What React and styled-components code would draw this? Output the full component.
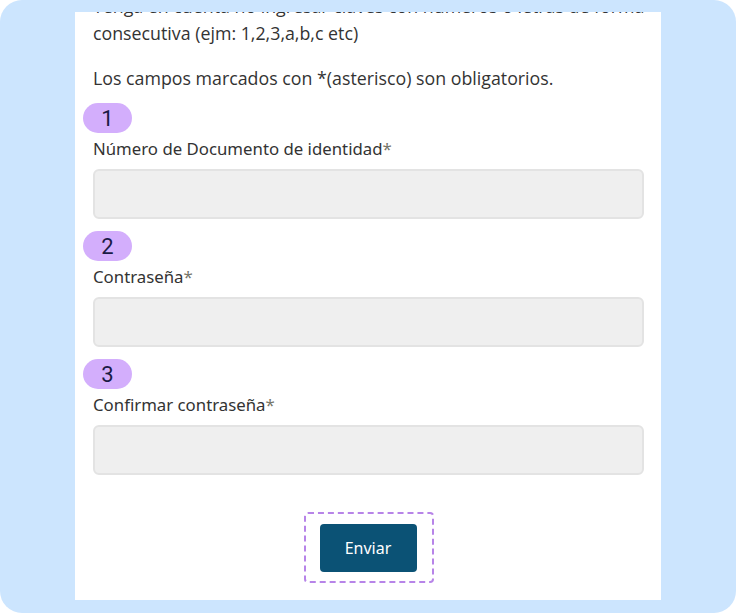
import React, { useLayoutEffect, useRef } from "react";
import styled, { createGlobalStyle } from "styled-components";

const Global = createGlobalStyle`
  html, body { margin: 0; padding: 0; background: #ffffff; }
  body { font-family: "Open Sans", "Liberation Sans", sans-serif; }
  * { box-sizing: border-box; }
`;

const Frame = styled.div`
  width: 736px;
  height: 613px;
  background: #cce5fe;
  border-radius: 22px;
  display: flex;
  justify-content: center;
  padding: 12px 0 13px;
`;

const Panel = styled.div`
  width: 586px;
  height: 588px;
  background: #ffffff;
  overflow: hidden;
`;

const Content = styled.div`
  padding: 0 17px 40px 18px;
  display: flex;
  flex-direction: column;
`;

const Paragraph = styled.p`
  margin: 0 0 ${(p) => p.$gap || 0}px;
  font-size: 17.8px;
  line-height: 27px;
  color: #333333;
  white-space: nowrap;
`;

const Field = styled.div`
  display: flex;
  flex-direction: column;
  margin-top: ${(p) => p.$top}px;
`;

const Badge = styled.div`
  width: 49px;
  height: 30px;
  margin-left: -10px;
  border-radius: 15px;
  background: #d3aefc;
  color: #1b1b45;
  font-family: Roboto, "Liberation Sans", sans-serif;
  font-size: 22px;
  display: flex;
  align-items: center;
  justify-content: center;
`;

const Label = styled.label`
  margin-top: 5px;
  height: 22px;
  line-height: 22px;
  font-family: "Noto Sans", "Open Sans", sans-serif;
  font-size: 16.8px;
  color: #333333;
`;

const Star = styled.span`
  color: #77776a;
`;

const Input = styled.input`
  margin-top: 9px;
  height: 50px;
  width: 100%;
  background: #efefef;
  border: 2px solid #e3e3e3;
  border-radius: 6px;
  outline: none;
`;

const Actions = styled.div`
  display: flex;
  justify-content: center;
  margin-top: 37px;
`;

const Focus = styled.div`
  border: 2px dashed #b784e8;
  border-radius: 4px;
  padding: 10px 15px 9px 14px;
`;

const Button = styled.button`
  width: 97px;
  height: 48px;
  background: #0b5275;
  color: #ffffff;
  border: none;
  border-radius: 4px;
  font-family: "Noto Sans", "Open Sans", sans-serif;
  font-size: 16px;
`;

const fields = [
  { n: 1, label: "Número de Documento de identidad", top: 11 },
  { n: 2, label: "Contraseña", top: 12 },
  { n: 3, label: "Confirmar contraseña", top: 12 },
];

export default function App() {
  const ref = useRef(null);
  useLayoutEffect(() => {
    if (ref.current) ref.current.scrollTop = 19;
  }, []);
  return (
    <>
      <Global />
      <Frame>
        <Panel ref={ref}>
          <Content>
            <Paragraph $gap={18}>
              Tenga en cuenta no ingresar claves con números o letras de forma
              <br />
              consecutiva (ejm: 1,2,3,a,b,c etc)
            </Paragraph>
            <Paragraph>
              Los campos marcados con *(asterisco) son obligatorios.
            </Paragraph>
            {fields.map((f) => (
              <Field key={f.n} $top={f.top}>
                <Badge>{f.n}</Badge>
                <Label>
                  {f.label}
                  <Star>*</Star>
                </Label>
                <Input type={f.n === 1 ? "text" : "password"} />
              </Field>
            ))}
            <Actions>
              <Focus>
                <Button>Enviar</Button>
              </Focus>
            </Actions>
          </Content>
        </Panel>
      </Frame>
    </>
  );
}
